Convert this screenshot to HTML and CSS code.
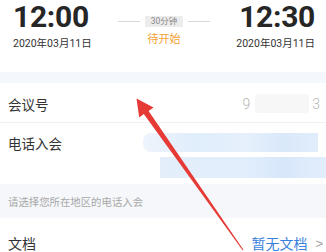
FILE: index.html
```html
<!DOCTYPE html>
<html lang="zh">
<head>
<meta charset="utf-8">
<link rel="stylesheet" href="styles.css">
</head>
<body>
<div class="page">
  <section class="times">
    <div class="tcol start">
      <div class="time">12:00</div>
      <div class="date">2020年03月11日</div>
    </div>
    <div class="mid">
      <div class="dur"><span class="line"></span><span class="badge">30分钟</span><span class="line"></span></div>
      <div class="status">待开始</div>
    </div>
    <div class="tcol end">
      <div class="time">12:30</div>
      <div class="date">2020年03月11日</div>
    </div>
  </section>
  <div class="band"></div>
  <div class="row meeting">
    <span class="label">会议号</span>
    <span class="num">9<span class="mask"></span>3</span>
  </div>
  <div class="row phone">
    <span class="label">电话入会</span>
    <div class="blurs"><div class="b1"></div><div class="b2"></div></div>
  </div>
  <div class="hint">请选择您所在地区的电话入会</div>
  <div class="row doc">
    <span class="label">文档</span>
    <span class="link">暂无文档<span class="chev">&gt;</span></span>
  </div>
  <svg class="arrow" width="326" height="252" viewBox="0 0 326 252">
    <polygon points="136.5,98.5 153.5,107.5 148.6,110.9 243.4,249.7 242.6,250.3 143.8,114.1 139.2,117.6" fill="#e53a35"/>
  </svg>
</div>
</body>
</html>
```
FILE: styles.css
```css
* { box-sizing: border-box; }
html, body { margin: 0; padding: 0; background: #fff; }
body { font-family: Roboto, "Noto Sans CJK SC", sans-serif; color: #333; }
.page { position: relative; width: 326px; height: 252px; overflow: hidden; }

.times { height: 72px; display: flex; justify-content: space-between; padding: 0 11px 0 13px; }
.tcol { display: flex; flex-direction: column; }
.tcol.start { align-items: flex-start; }
.tcol.end { align-items: flex-end; }
.time { font-size: 30px; line-height: 35px; margin-top: -1px; font-weight: 700; color: #262626; letter-spacing: -0.3px; }
.date { font-size: 10.5px; line-height: 14px; margin-top: 3px; color: #333; }

.mid { display: flex; flex-direction: column; align-items: center; padding-top: 16px; }
.dur { display: flex; align-items: center; gap: 5px; }
.line { width: 22px; height: 1px; background: #d8d8d8; }
.badge { background: #ececec; color: #8a8a8a; font-size: 8.5px; line-height: 11px; padding: 0 6px; border-radius: 1px; }
.status { margin-top: 6px; font-size: 11px; line-height: 13px; color: #f5a030; }

.band { height: 11px; background: #f4f7fb; }

.row { display: flex; padding-left: 8px; }
.label { font-family: "Noto Sans CJK SC", sans-serif; font-size: 13.5px; color: #333; }
.meeting { height: 40px; align-items: center; border-bottom: 1px solid #f1f1f1; padding-right: 6px; padding-top: 2px; }
.num { margin-left: auto; display: flex; align-items: center; font-size: 14px; color: #b4b4b4; font-weight: 300; }
.mask { width: 54px; height: 19px; background: #f7f7f7; margin: 0 3px 0 5px; border-radius: 2px; }

.phone { height: 61px; padding-top: 10px; align-items: flex-start; }
.phone .label { line-height: 20px; }
.blurs { margin-left: auto; display: flex; flex-direction: column; align-items: flex-end; gap: 5px; }
.b1 { width: 175px; height: 19px; margin-right: 8px; background: linear-gradient(90deg, #eef4fc 0%, #e0edfb 30%, #e6f0fc 60%, #d9e8fa 80%, #e1edfb 100%); border-radius: 8px 0 0 8px; }
.b2 { width: 166px; height: 21px; background: linear-gradient(90deg, #e4eefb 0%, #e2eefc 50%, #d7e7fa 75%, #e3eefc 100%); }

.hint { height: 34px; background: #f5f7fa; padding-left: 8px; display: flex; align-items: center; font-family: "Noto Sans CJK SC", sans-serif; font-size: 10.4px; color: #a8a8a8; }

.doc { height: 50px; align-items: center; padding-right: 3px; }
.doc .label { font-size: 14px; }
.link { margin-left: auto; font-family: "Noto Sans CJK SC", sans-serif; font-size: 14px; color: #3a7fdc; display: flex; align-items: center; }
.chev { color: #a0a0a0; margin-left: 8px; font-family: "Liberation Sans", sans-serif; font-size: 13px; }

.arrow { position: absolute; left: 0; top: 0; pointer-events: none; }
```
